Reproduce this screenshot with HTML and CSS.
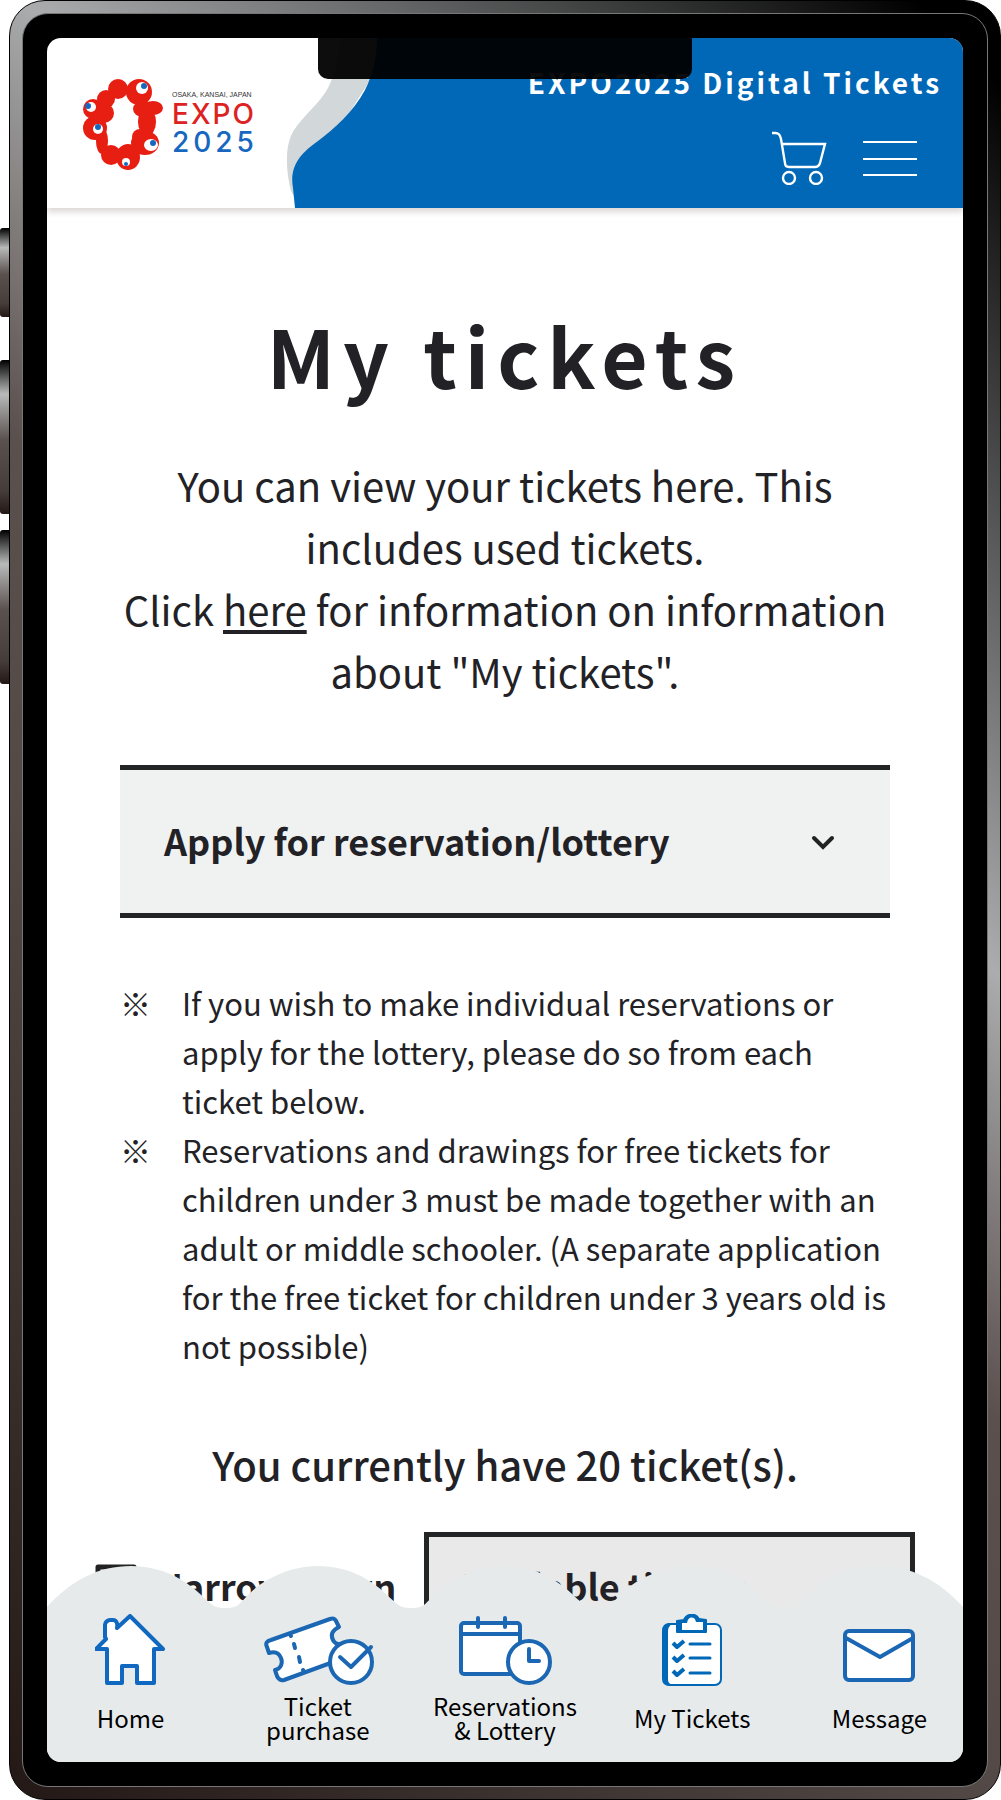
FILE: index.html
```html
<!DOCTYPE html>
<html lang="en">
<head>
    <meta charset="UTF-8">
    <meta name="viewport" content="width=device-width, initial-scale=1.0">
    <title>My tickets</title>
    <link rel="stylesheet" href="styles.css">
</head>
<body>
  <div class="phone">
    <span class="side-button mute"></span>
    <span class="side-button volume-up"></span>
    <span class="side-button volume-down"></span>

    <div class="bezel">
      <div class="screen">
        <div class="notch"></div>

        <header class="header">
          <!-- blue wave behind the header content -->
          <svg class="header-wave" viewBox="0 0 722 170" preserveAspectRatio="xMinYMin slice" aria-hidden="true">
            <path fill="#d2d7da" d="M53 0C52 18 48 36 41 50C33 65 17 77 7 92C-3 108-1 133 4 153L8 160L110 0Z"/>
            <path fill="#0068b7" d="M90 0C90 18 86 36 78 52C66 74 48 90 31 103C14 115 2 128 6 150L8 170H722V0Z"/>
          </svg>

          <a class="logo" href="#" aria-label="EXPO 2025 Osaka, Kansai, Japan">
            <svg class="logo-mark" viewBox="0 0 80 92" aria-hidden="true">
              <g fill="#e71f12">
                <circle cx="35" cy="10" r="10"/>
                <circle cx="56" cy="13" r="13"/>
                <ellipse cx="60" cy="30" rx="10" ry="8"/>
                <ellipse cx="70" cy="29" rx="10" ry="7"/>
                <ellipse cx="64" cy="43" rx="9" ry="14"/>
                <ellipse cx="62" cy="64" rx="14" ry="12"/>
                <circle cx="57" cy="58" r="8"/>
                <ellipse cx="45" cy="78" rx="12" ry="13"/>
                <circle cx="28" cy="76" r="10"/>
                <ellipse cx="19" cy="62" rx="6" ry="13"/>
                <circle cx="12" cy="49" r="12"/>
                <circle cx="10" cy="30" r="10"/>
                <circle cx="21" cy="34" r="10"/>
                <circle cx="23" cy="20" r="9"/>
              </g>
              <g fill="#fff">
                <circle cx="59" cy="9" r="6"/>
                <circle cx="8" cy="28" r="5"/>
                <circle cx="15" cy="50" r="5"/>
                <ellipse cx="68" cy="66" rx="7" ry="6"/>
                <circle cx="43" cy="83" r="4"/>
              </g>
              <g fill="#1767c0">
                <circle cx="61" cy="7" r="3"/>
                <circle cx="5" cy="27" r="3"/>
                <circle cx="15" cy="48" r="3"/>
                <circle cx="70" cy="64" r="3"/>
                <circle cx="43" cy="85" r="2"/>
              </g>
            </svg>
            <span class="logo-text">
              <span class="logo-place">OSAKA, KANSAI, JAPAN</span>
              <span class="logo-expo">EXPO</span>
              <span class="logo-year">2025</span>
            </span>
          </a>

          <div class="header-right">
            <p class="site-name">EXPO2025 Digital Tickets</p>
            <div class="header-buttons">
              <button class="icon-button" type="button" aria-label="Cart">
                <svg width="56" height="54" viewBox="0 0 56 54" fill="none" stroke="#fff" stroke-width="2.4">
                  <path d="M1 2H4C8 2 9 4 10 8L14 32C14 35 16 36 18 36H44C47 36 48 35 49 32L54 13H11"/>
                  <circle cx="18" cy="47" r="6"/>
                  <circle cx="45" cy="47" r="6"/>
                </svg>
              </button>
              <button class="icon-button" type="button" aria-label="Menu">
                <svg width="54" height="54" viewBox="0 0 54 54" stroke="#fff" stroke-width="2">
                  <path d="M0 11H54M0 28H54M0 44H54"/>
                </svg>
              </button>
            </div>
          </div>
        </header>

        <main class="main">
          <h1 class="title">My tickets</h1>
          <p class="lead">
            You can view your tickets here. This includes used tickets.<br>
            Click <a href="#">here</a> for information on information about "My tickets".
          </p>

          <button class="accordion" type="button" aria-expanded="false">
            Apply for reservation/lottery
            <svg width="24" height="20" viewBox="0 0 24 20" fill="none" stroke="#222" stroke-width="4" stroke-linecap="round" aria-hidden="true">
              <path d="M3 8L12 17L21 8"/>
            </svg>
          </button>

          <ul class="notes">
            <li>If you wish to make individual reservations or apply for the lottery, please do so from each ticket below.</li>
            <li>Reservations and drawings for free tickets for children under 3 must be made together with an adult or middle schooler. (A separate application for the free ticket for children under 3 years old is not possible)</li>
          </ul>

          <p class="count">You currently have 20 ticket(s).</p>

          <div class="filter">
            <label class="filter-label" for="ticketFilter">
              <svg width="42" height="42" viewBox="0 0 42 42" fill="none" stroke="#222" stroke-width="5" stroke-linejoin="round" aria-hidden="true">
                <path d="M3 3H39V8L25 22V39L17 33V22L3 8Z"/>
              </svg>
              Narrow down
            </label>
            <select class="filter-select" id="ticketFilter">
              <option>Available tickets</option>
              <option>Used tickets</option>
            </select>
          </div>
        </main>

        <nav class="nav">
          <svg class="nav-wave" viewBox="0 0 916 42" preserveAspectRatio="none" aria-hidden="true">
            <path fill="#e6eaeb" d="M0 42V41C24 14 52 0 84 0C115 0 138 14 152 27S167 42 179 42S192 38 203 27S240 0 271 0S324 14 338 27S353 42 365 42S378 38 389 27S426 0 457 0S510 14 524 27S539 42 551 42S564 38 575 27S613 0 644 0S697 14 711 27S726 42 738 42S751 38 762 27S799 0 830 0C864 0 892 14 916 41V42Z"/>
          </svg>
          <ul class="nav-list">
            <li>
              <a href="#">
                <svg width="72" height="72" viewBox="0 0 72 72" fill="#fff" stroke="#1068c0" stroke-width="4" stroke-linejoin="round" aria-hidden="true">
                  <path d="M35 2L68 35H59V69H42V52H27V69H12V35H1L11 25L10 23V11C10 8 13 6 15 6H18C21 6 23 9 22 14Z"/>
                </svg>
                <span>Home</span>
              </a>
            </li>
            <li>
              <a href="#">
                <svg width="112" height="72" viewBox="0 0 112 72" fill="#fff" stroke="#1b67b3" stroke-width="4" stroke-linecap="round" stroke-linejoin="round" aria-hidden="true">
                  <path d="M9 26L68 5C71 4 73 5 74 7L77 13C71 16 68 20 71 26C73 30 76 31 81 30L85 43L22 66C19 67 16 65 15 62L13 56C19 55 21 49 19 44C17 39 13 37 7 39L5 33C3 29 5 27 9 26Z"/>
                  <path d="M28 20L29 22M32 30L33 34M37 43L38 48M41 56L42 58"/>
                  <circle cx="89" cy="48" r="21"/>
                  <path fill="none" d="M78 43L89 53L109 33"/>
                </svg>
                <span>Ticket purchase</span>
              </a>
            </li>
            <li>
              <a href="#">
                <svg width="94" height="72" viewBox="0 0 94 72" fill="#fff" stroke="#1b67b3" stroke-width="4" stroke-linecap="round" stroke-linejoin="round" aria-hidden="true">
                  <rect x="3" y="9" width="59" height="51" rx="3"/>
                  <path d="M3 20H62M20 4V13M47 4V13"/>
                  <circle cx="71" cy="48" r="21"/>
                  <path fill="none" d="M71 35V47H81"/>
                </svg>
                <span>Reservations &amp;&nbsp;Lottery</span>
              </a>
            </li>
            <li>
              <a href="#">
                <svg width="60" height="72" viewBox="0 0 60 72" fill="#fff" stroke="#0068b7" stroke-width="2" stroke-linejoin="round" aria-hidden="true">
                  <rect x="2" y="10" width="57" height="61" rx="6"/>
                  <path fill="#0068b7" d="M8 10C3 10 1 13 1 17V65C1 69 4 71 8 71C6 70 5 68 5 65V17C5 13 6 12 8 10Z"/>
                  <path fill="#0068b7" d="M15 7L22 6C25-1 34-1 37 5L44 6V18H15Z"/>
                  <path stroke="none" d="M20 9H25C26 2 33 2 34 8H41V16H20Z"/>
                  <path fill="none" stroke-width="4" d="M11 29L15 33L22 27M11 43L15 47L22 41M11 57L15 61L22 55"/>
                  <path stroke-linecap="round" stroke-width="3" d="M28 30H48M28 44H48M28 59H48"/>
                </svg>
                <span>My Tickets</span>
              </a>
            </li>
            <li>
              <a href="#">
                <svg width="74" height="72" viewBox="0 0 74 72" fill="#fff" stroke="#1b67b3" stroke-width="4" stroke-linejoin="round" aria-hidden="true">
                  <rect x="3" y="17" width="68" height="49" rx="4"/>
                  <path fill="none" d="M4 24L38 43L71 24"/>
                </svg>
                <span>Message</span>
              </a>
            </li>
          </ul>
        </nav>
      </div>
    </div>
  </div>
</body>
</html>
```

FILE: styles.css
```css
* {
  margin: 0;
  padding: 0;
  box-sizing: border-box;
}

body {
  background-color: #fff;
  color: #222226;
  font-family: "Noto Sans CJK JP", "Noto Sans", sans-serif;
}

a {
  color: inherit;
}

button {
  font-family: inherit;
  color: inherit;
  border: none;
  background: none;
}

/* phone frame */
.phone {
  position: relative;
  display: flex;
  min-height: 100vh;
  margin-left: 9px;
  padding: 12px;
  border: 1px solid #000;
  border-radius: 36px;
  background: linear-gradient(225deg, #000 3%, #aaacad 35%, #5a504e 51%, #534a47 64%, #231815) border-box;
}

.side-button {
  position: absolute;
  left: -10px;
  width: 9px;
  border-radius: 3px 0 0 3px;
  background: linear-gradient(#000, #b8baba 22%, #5a504e 52%, #463c39 85%, #231815);
}

.mute {
  top: 227px;
  height: 89px;
}

.volume-up {
  top: 359px;
  height: 154px;
}

.volume-down {
  top: 529px;
  height: 154px;
}

.bezel {
  display: flex;
  flex: 1;
  min-width: 0;
  padding: 24px;
  border: 1px solid #777;
  border-radius: 26px;
  background-color: #000;
}

.screen {
  position: relative;
  display: flex;
  flex-direction: column;
  flex: 1;
  min-width: 0;
  overflow: hidden;
  border-radius: 14px;
  background-color: #fff;
}

.notch {
  position: absolute;
  z-index: 2;
  top: 0;
  left: 50%;
  width: 374px;
  height: 41px;
  margin-left: -187px;
  border-radius: 0 0 10px 10px;
  background-color: rgba(0, 0, 0, 0.95);
}

/* header */
.header {
  position: relative;
  display: flex;
  justify-content: space-between;
  height: 170px;
  box-shadow: 0 4px 6px rgba(80, 60, 50, 0.2);
}

.header-wave {
  position: absolute;
  top: 0;
  right: 0;
  width: calc(100% - 240px);
  height: 170px;
}

.logo {
  display: flex;
  align-items: flex-start;
  gap: 9px;
  padding: 41px 0 0 36px;
  text-decoration: none;
}

.logo-mark {
  width: 80px;
  height: 92px;
}

.logo-text {
  display: flex;
  flex-direction: column;
  padding-top: 11px;
  font-family: Inter, "Liberation Sans", sans-serif;
  font-weight: 500;
}

.logo-place {
  font-family: "Liberation Sans", sans-serif;
  font-size: 7px;
  line-height: 10px;
  color: #333;
}

.logo-expo,
.logo-year {
  font-size: 28px;
  line-height: 28px;
}

.logo-expo {
  color: #dd2222;
  letter-spacing: 2px;
}

.logo-year {
  color: #1767c0;
  letter-spacing: 4px;
}

.header-right {
  position: relative;
  display: flex;
  flex-direction: column;
  align-items: flex-end;
  padding: 23px 21px 0 0;
  color: #fff;
}

.site-name {
  font-size: 28px;
  line-height: 42px;
  font-weight: 700;
  letter-spacing: 3px;
}

.header-buttons {
  display: flex;
  gap: 36px;
  padding: 28px 25px 0 0;
}

.icon-button svg {
  display: block;
}

/* content */
.main {
  flex: 1;
  padding: 86px 73px 0;
}

.title {
  font-size: 80px;
  line-height: 120px;
  font-weight: 700;
  letter-spacing: 8px;
  text-align: center;
}

.lead {
  margin: 40px -10px 0;
  font-size: 40px;
  line-height: 62px;
  text-align: center;
}

.lead a {
  text-decoration-thickness: 4px;
  text-underline-offset: 4px;
}

.accordion {
  display: flex;
  align-items: center;
  justify-content: space-between;
  width: 100%;
  height: 153px;
  margin-top: 63px;
  padding: 0 55px 3px 44px;
  border-top: 5px solid #222426;
  border-bottom: 5px solid #222426;
  background-color: #f0f2f2;
  font-size: 36px;
  font-weight: 700;
}

.notes {
  margin: 60px -10px 0 0;
  list-style: none;
  font-size: 31px;
  line-height: 49px;
}

.notes li {
  position: relative;
  padding-left: 62px;
}

.notes li::before {
  content: "※";
  position: absolute;
  left: 0;
}

.count {
  margin-top: 66px;
  font-size: 40px;
  line-height: 56px;
  font-weight: 500;
  text-align: center;
}

.filter {
  display: flex;
  align-items: center;
  justify-content: space-between;
  height: 106px;
  margin: 40px -25px 0;
  font-size: 36px;
  font-weight: 700;
}

.filter-label {
  display: flex;
  align-items: center;
  gap: 19px;
}

.filter-select {
  width: 491px;
  height: 106px;
  padding: 0 28px;
  border: 5px solid #222426;
  border-radius: 0;
  background-color: #e9e9e9;
  color: inherit;
  font: inherit;
  appearance: none;
}

/* bottom navigation, laid over the end of the content */
.nav {
  position: relative;
  margin-top: -74px;
}

.nav-wave {
  display: block;
  width: 100%;
  height: 42px;
}

.nav-list {
  display: grid;
  grid-template-columns: repeat(5, 1fr);
  padding: 6px 0 20px;
  margin: 0 -10px;
  list-style: none;
  background-color: #e6eaeb;
}

.nav-list a {
  display: flex;
  flex-direction: column;
  align-items: center;
  gap: 8px;
  color: #000;
  font-size: 24px;
  line-height: 24px;
  text-align: center;
  text-decoration: none;
}

.nav-list svg {
  height: 72px;
}

.nav-list span {
  display: flex;
  align-items: center;
  max-width: 150px;
  height: 48px;
}
```
